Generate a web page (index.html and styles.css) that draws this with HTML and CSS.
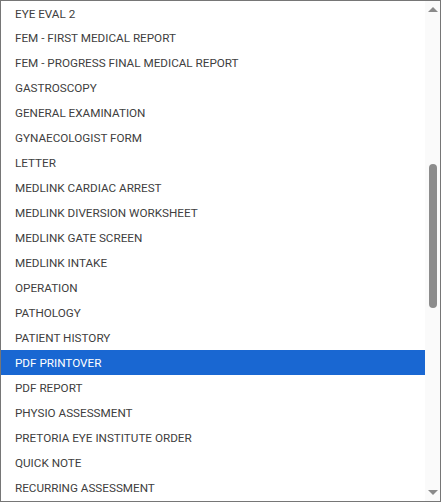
FILE: index.html
```html
<!DOCTYPE html>
<html>
<head>
<meta charset="utf-8">
<link rel="stylesheet" href="styles.css">
</head>
<body>
<div class="box">
  <ul class="list">
    <li class="item">EYE EVAL 2</li>
    <li class="item">FEM - FIRST MEDICAL REPORT</li>
    <li class="item">FEM - PROGRESS FINAL MEDICAL REPORT</li>
    <li class="item">GASTROSCOPY</li>
    <li class="item">GENERAL EXAMINATION</li>
    <li class="item">GYNAECOLOGIST FORM</li>
    <li class="item">LETTER</li>
    <li class="item">MEDLINK CARDIAC ARREST</li>
    <li class="item">MEDLINK DIVERSION WORKSHEET</li>
    <li class="item">MEDLINK GATE SCREEN</li>
    <li class="item">MEDLINK INTAKE</li>
    <li class="item">OPERATION</li>
    <li class="item">PATHOLOGY</li>
    <li class="item">PATIENT HISTORY</li>
    <li class="item selected">PDF PRINTOVER</li>
    <li class="item">PDF REPORT</li>
    <li class="item">PHYSIO ASSESSMENT</li>
    <li class="item">PRETORIA EYE INSTITUTE ORDER</li>
    <li class="item">QUICK NOTE</li>
    <li class="item">RECURRING ASSESSMENT</li>
  </ul>
  <div class="scrollbar">
    <div class="arrow up"><svg width="10" height="5" viewBox="0 0 10 5"><polygon points="5,0 10,5 0,5" fill="#8a8a8a"/></svg></div>
    <div class="track">
      <div class="thumb" style="margin-top:146px;height:144px"></div>
    </div>
    <div class="arrow down"><svg width="10" height="5" viewBox="0 0 10 5"><polygon points="0,0 10,0 5,5" fill="#8a8a8a"/></svg></div>
  </div>
</div>
</body>
</html>
```
FILE: styles.css
```css
html, body {
  margin: 0;
  padding: 0;
  background: #ffffff;
}
.box {
  width: 441px;
  height: 502px;
  box-sizing: border-box;
  border: 1px solid #767676;
  display: flex;
  overflow: hidden;
  background: #ffffff;
}
.list {
  flex: 1;
  margin: 0;
  padding: 0;
  list-style: none;
  overflow: hidden;
}
.item {
  box-sizing: border-box;
  height: 25px;
  padding-top: 1px;
  line-height: 24px;
  padding-left: 14px;
  font-family: Roboto, "Liberation Sans", sans-serif;
  font-size: 11.7px;
  color: #404040;
  white-space: nowrap;
}
.item:first-child {
  height: 24px;
}
.item.selected {
  background: #1967d2;
  color: #ffffff;
}
.scrollbar {
  width: 15px;
  background: #fafafa;
  display: flex;
  flex-direction: column;
}
.arrow {
  display: flex;
  justify-content: center;
}
.arrow svg {
  display: block;
}
.arrow.up {
  align-items: flex-start;
  padding-top: 6px;
  height: 11px;
}
.arrow.down {
  align-items: flex-end;
  padding-bottom: 6px;
  height: 11px;
}
.track {
  flex: 1;
  display: flex;
  flex-direction: column;
  align-items: center;
}
.thumb {
  width: 8px;
  border-radius: 4px;
  background: #8c8c8c;
}
```
